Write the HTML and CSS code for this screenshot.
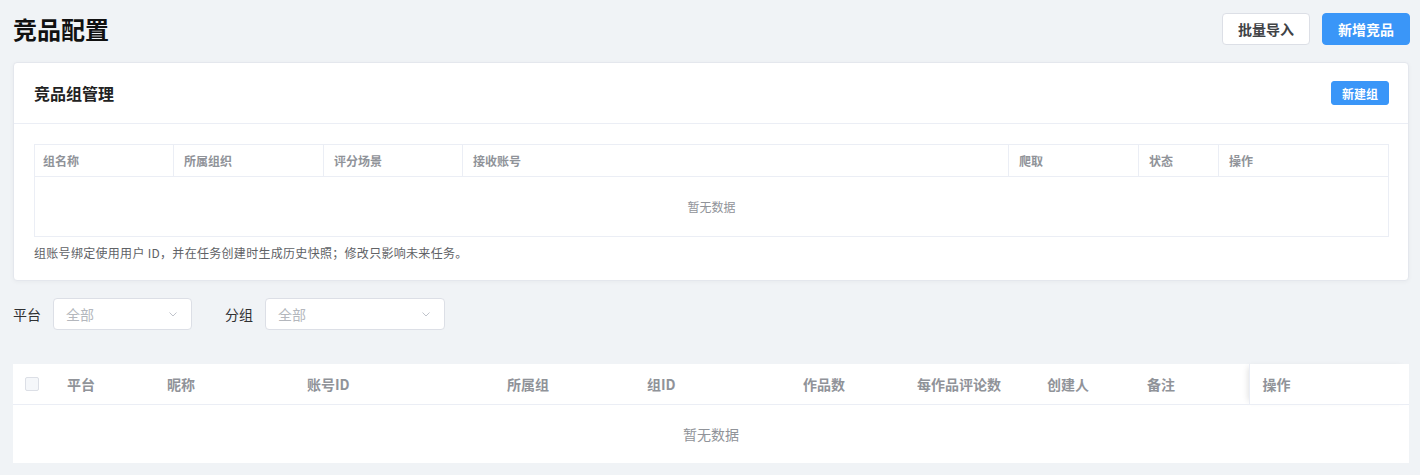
FILE: index.html
```html
<!DOCTYPE html>
<html lang="zh-CN">
<head>
    <meta charset="UTF-8">
    <meta name="viewport" content="width=device-width, initial-scale=1.0">
    <title>竞品配置</title>
    <link rel="stylesheet" href="styles.css">
</head>
<body>
    <div class="page">
        <div class="page-header">
            <h1>竞品配置</h1>
            <div class="actions">
                <button class="btn">批量导入</button>
                <button class="btn btn-primary">新增竞品</button>
            </div>
        </div>

        <div class="card">
            <div class="card-header">
                <span class="card-title">竞品组管理</span>
                <button class="btn btn-primary btn-mini">新建组</button>
            </div>
            <div class="card-body">
                <table class="group-table">
                    <colgroup>
                        <col style="width:139px">
                        <col style="width:150px">
                        <col style="width:139px">
                        <col style="width:546px">
                        <col style="width:130px">
                        <col style="width:80px">
                        <col style="width:170px">
                    </colgroup>
                    <thead>
                        <tr>
                            <th>组名称</th>
                            <th>所属组织</th>
                            <th>评分场景</th>
                            <th>接收账号</th>
                            <th>爬取</th>
                            <th>状态</th>
                            <th>操作</th>
                        </tr>
                    </thead>
                    <tbody>
                        <tr><td colspan="7" class="empty">暂无数据</td></tr>
                    </tbody>
                </table>
                <p class="tip">组账号绑定使用用户 ID，并在任务创建时生成历史快照；修改只影响未来任务。</p>
            </div>
        </div>

        <div class="filters">
            <label>平台</label>
            <div class="select select-sm">
                <span>全部</span>
                <svg width="12" height="12" viewBox="0 0 12 12"><path d="M2.5 4.5 L6 8 L9.5 4.5" fill="none" stroke="#c0c4cc" stroke-width="1"/></svg>
            </div>
            <label class="second">分组</label>
            <div class="select select-md">
                <span>全部</span>
                <svg width="12" height="12" viewBox="0 0 12 12"><path d="M2.5 4.5 L6 8 L9.5 4.5" fill="none" stroke="#c0c4cc" stroke-width="1"/></svg>
            </div>
        </div>

        <table class="data-table">
            <colgroup>
                <col style="width:44px">
                <col style="width:100px">
                <col style="width:140px">
                <col style="width:200px">
                <col style="width:140px">
                <col style="width:156px">
                <col style="width:114px">
                <col style="width:130px">
                <col style="width:100px">
                <col style="width:112px">
                <col style="width:160px">
            </colgroup>
            <thead>
                <tr>
                    <th class="check-col"><span class="checkbox"></span></th>
                    <th>平台</th>
                    <th>昵称</th>
                    <th>账号ID</th>
                    <th>所属组</th>
                    <th>组ID</th>
                    <th>作品数</th>
                    <th>每作品评论数</th>
                    <th>创建人</th>
                    <th>备注</th>
                    <th class="fixed-col">操作</th>
                </tr>
            </thead>
            <tbody>
                <tr><td colspan="11" class="empty">暂无数据</td></tr>
            </tbody>
        </table>
    </div>
</body>
</html>
```

FILE: styles.css
```css
* {
    box-sizing: border-box;
}
body {
    margin: 0;
    background-color: #f0f3f6;
    font-family: "Noto Sans CJK SC", "Liberation Sans", sans-serif;
    color: #303133;
}
.page {
    padding: 13px 10px 0 13px;
}
.page-header {
    display: flex;
    align-items: center;
    justify-content: space-between;
    height: 32px;
}
h1 {
    margin: 0;
    font-size: 24px;
    font-weight: 700;
    color: #111;
    line-height: 32px;
}
.actions {
    display: flex;
    gap: 12px;
}
.btn {
    height: 32px;
    padding: 0 15px;
    font-family: inherit;
    font-size: 14px;
    font-weight: 600;
    color: #404246;
    background: #fff;
    border: 1px solid #dcdfe6;
    border-radius: 4px;
    cursor: pointer;
}
.btn-primary {
    color: #fff;
    background: #3a96f8;
    border-color: #3a96f8;
}
.btn-mini {
    height: 24px;
    padding: 0 10px;
    font-size: 12px;
    border-radius: 3px;
}
.card {
    margin-top: 17px;
    margin-right: 1px;
    background: #fff;
    border: 1px solid #e4e7ed;
    border-radius: 4px;
    box-shadow: 0 1px 4px rgba(0,0,0,0.04);
}
.card-header {
    display: flex;
    align-items: center;
    justify-content: space-between;
    height: 61px;
    padding: 0 19px 0 20px;
    border-bottom: 1px solid #ebeef5;
}
.card-title {
    font-size: 16px;
    font-weight: 700;
    color: #222;
}
.card-body {
    padding: 20px 20px 18px 20px;
}
table {
    border-collapse: collapse;
    table-layout: fixed;
}
.group-table {
    width: 100%;
    border: 1px solid #ebeef5;
}
.group-table th {
    height: 32px;
    padding: 0 10px;
    font-size: 12px;
    font-weight: 700;
    color: #909399;
    text-align: left;
    border-right: 1px solid #ebeef5;
    border-bottom: 1px solid #ebeef5;
}
.group-table th:first-child {
    padding-left: 8px;
}
.group-table th:last-child {
    border-right: none;
}
.group-table .empty {
    height: 60px;
    font-size: 12px;
    color: #909399;
    text-align: center;
}
.tip {
    margin: 7px 0 0;
    font-size: 12px;
    line-height: 18px;
    letter-spacing: 0.3px;
    color: #606266;
}
.filters {
    display: flex;
    align-items: center;
    margin-top: 17px;
    height: 32px;
}
.filters label {
    font-size: 14px;
    color: #303133;
    margin-right: 12px;
}
.filters label.second {
    margin-left: 33px;
}
.select {
    display: flex;
    align-items: center;
    justify-content: space-between;
    height: 32px;
    padding: 0 12px;
    background: #fff;
    border: 1px solid #dcdfe6;
    border-radius: 4px;
    font-size: 14px;
    color: #b4b7bd;
}
.select-sm {
    width: 139px;
}
.select-md {
    width: 180px;
}
.data-table {
    width: 1396px;
    margin-top: 34px;
    background: #fff;
}
.data-table th {
    height: 40px;
    padding: 0 10px;
    font-size: 14px;
    font-weight: 700;
    color: #909399;
    text-align: left;
    border-bottom: 1px solid #ebeef5;
}
.data-table th.check-col {
    padding: 0 0 0 12px;
}
.checkbox {
    display: block;
    width: 14px;
    height: 14px;
    border: 1px solid #dcdfe6;
    border-radius: 2px;
    background: #f5f7fa;
}
.data-table th.fixed-col {
    padding-left: 13px;
    box-shadow: -4px 0 6px -3px rgba(0,0,0,0.12);
    border-left: 1px solid #ebeef5;
}
.data-table .empty {
    height: 59px;
    font-size: 14px;
    color: #909399;
    text-align: center;
}
```
